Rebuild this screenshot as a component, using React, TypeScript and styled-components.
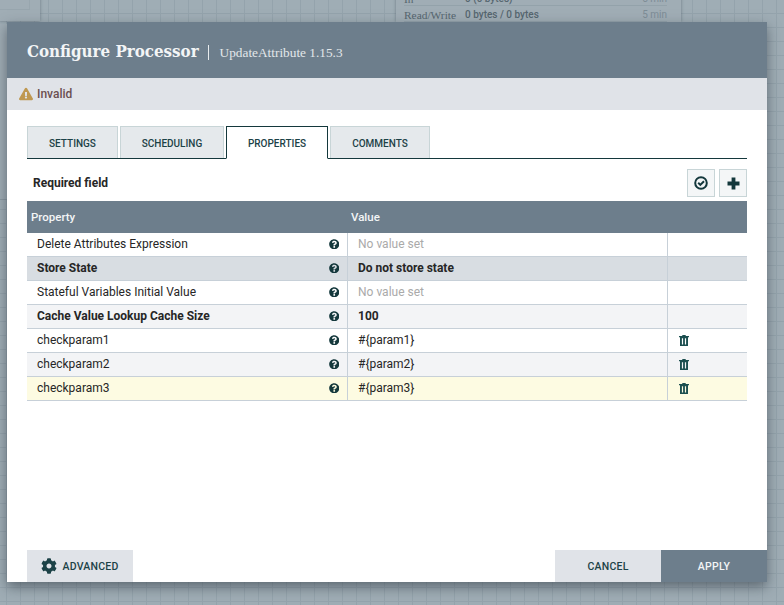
import React from "react";
import styled, { createGlobalStyle } from "styled-components";
import { FaCog, FaQuestionCircle, FaExclamationTriangle } from "react-icons/fa";

const Global = createGlobalStyle`
  html, body { margin: 0; padding: 0; width: 784px; height: 605px; overflow: hidden; }
  body { font-family: Roboto, "Liberation Sans", sans-serif; }
  * { box-sizing: border-box; }
`;

const Canvas = styled.div`
  position: relative;
  width: 784px;
  height: 605px;
  overflow: hidden;
  background-color: #9fadb5;
  background-image:
    linear-gradient(#94a3ac 1px, transparent 1px),
    linear-gradient(90deg, #94a3ac 1px, transparent 1px);
  background-size: 14px 14px;
  background-position: 6px 13px;
`;

const NodeCard = styled.div`
  position: absolute;
  left: 396px;
  top: -10px;
  width: 285px;
  height: 32px;
  background: #a0adb5;
  box-shadow: 0 0 3px rgba(60, 75, 85, 0.5);
  padding: 0 14px 0 8px;
  font-family: "Liberation Serif", serif;
  font-size: 11.4px;
  color: #56666f;
`;

const NodeRow = styled.div`
  display: grid;
  grid-template-columns: 61px 1fr auto;
  height: 16px;
  align-items: center;
  border-bottom: 1px solid #93a2aa;
  padding-top: 2px;
`;

const NodeValue = styled.span`
  font-family: Roboto, sans-serif;
  font-weight: 500;
  font-size: 10px;
`;

const NodeAge = styled.span`
  font-family: Roboto, sans-serif;
  font-size: 10px;
  color: #7d8c95;
`;

const CornerCard = styled.div`
  position: absolute;
  left: -1px;
  top: -8px;
  width: 41px;
  height: 29px;
  background: #a0adb5;
  box-shadow: 0 0 3px rgba(60, 75, 85, 0.5);
  &::after {
    content: "";
    position: absolute;
    left: 0;
    top: 0;
    width: 30px;
    height: 17px;
    border: solid #98a6ae;
    border-width: 0 1px 1px 0;
  }
`;

const SideCard = styled.div`
  position: absolute;
  left: -1px;
  top: 24px;
  width: 8px;
  height: 176px;
  background: #a0adb5;
  border-bottom: 1px solid #8b99a2;
`;

const Dialog = styled.div`
  position: absolute;
  left: 7px;
  top: 22px;
  width: 760px;
  height: 560px;
  background: #fff;
  box-shadow: 0 5px 12px rgba(40, 50, 58, 0.55);
  display: flex;
  flex-direction: column;
`;

const Header = styled.header`
  height: 56px;
  background: #6d7e8c;
  display: flex;
  align-items: center;
  padding: 0 0 0 20px;
  flex: none;
`;

const Title = styled.h1`
  margin: 0;
  padding-top: 2px;
  font-family: "DejaVu Serif Condensed", "DejaVu Serif", serif;
  font-size: 16.8px;
  font-weight: 700;
  color: #f3f5f6;
`;

const Subtitle = styled.span`
  margin: 4px 0 0 9px;
  padding-left: 11px;
  border-left: 1px solid #e8ecee;
  font-family: "Liberation Serif", serif;
  font-size: 13.3px;
  line-height: 15px;
  color: #e3e7ea;
`;

const StatusBar = styled.div`
  height: 32px;
  flex: none;
  background: #e0e3e8;
  display: flex;
  align-items: center;
  gap: 4px;
  padding-left: 12px;
  font-size: 12px;
  font-weight: 500;
  color: #6b4f50;
  svg { color: #bf9850; font-size: 14px; }
`;

const Body = styled.div`
  flex: 1;
  padding: 16px 20px 0;
  display: flex;
  flex-direction: column;
  min-height: 0;
`;

const Tabs = styled.div`
  display: flex;
  height: 33px;
  flex: none;
  border-bottom: 1px solid #14383c;
`;

const Tab = styled.div<{ $w: number; $gap: number; $active?: boolean }>`
  width: ${(p) => p.$w}px;
  margin-right: ${(p) => p.$gap}px;
  height: ${(p) => (p.$active ? 33 : 32)}px;
  display: flex;
  align-items: center;
  justify-content: center;
  padding-top: 2px;
  font-size: 10px;
  font-weight: 500;
  color: #1c4247;
  background: ${(p) => (p.$active ? "#fff" : "#e5e9ec")};
  border: 1px solid ${(p) => (p.$active ? "#14383c" : "#c8d5d7")};
  border-bottom: ${(p) => (p.$active ? "1px solid #fff" : "none")};
`;

const Toolbar = styled.div`
  height: 42px;
  flex: none;
  display: flex;
  align-items: center;
  justify-content: space-between;
  padding: 6px 0 0 6px;
`;

const Required = styled.div`
  font-size: 12px;
  font-weight: 700;
  color: #262626;
`;

const ToolButtons = styled.div`
  display: flex;
  gap: 4px;
`;

const ToolButton = styled.div`
  width: 28px;
  height: 28px;
  display: flex;
  align-items: center;
  justify-content: center;
  background: #f4f6f7;
  border: 1px solid #c8d5d7;
  color: #14383c;
`;

const Table = styled.div`
  display: flex;
  flex-direction: column;
`;

const HeadRow = styled.div`
  display: grid;
  grid-template-columns: 320px 320px 80px;
  height: 32px;
  background: #6d7e8c;
  color: #f3f5f6;
  font-size: 11.5px;
  font-weight: 500;
  align-items: center;
`;

const HeadCell = styled.div`
  padding: 0 0 1px 4px;
`;

const Row = styled.div<{ $bg: string }>`
  display: grid;
  grid-template-columns: 321px 320px 79px;
  height: 24px;
  background: ${(p) => p.$bg};
  border-bottom: 1px solid #c7d0d8;
  font-size: 12px;
  color: #262626;
`;

const NameCell = styled.div<{ $bold?: boolean }>`
  display: flex;
  align-items: center;
  justify-content: space-between;
  padding: 0 8px 1px 10px;
  font-weight: ${(p) => (p.$bold ? 700 : 400)};
  border-right: 1px solid #c7d0d8;
  svg { color: #14383c; font-size: 10.5px; }
`;

const ValueCell = styled.div<{ $bold?: boolean; $empty?: boolean }>`
  display: flex;
  align-items: center;
  padding: 0 0 1px 10px;
  font-weight: ${(p) => (p.$bold ? 700 : 400)};
  color: ${(p) => (p.$empty ? "#aaaaaa" : "#262626")};
  border-right: 1px solid #c7d0d8;
`;

const ActionCell = styled.div`
  display: flex;
  align-items: center;
  padding: 0 0 1px 11px;
  color: #1c4f50;
`;

const Footer = styled.footer`
  height: 32px;
  flex: none;
  display: flex;
  justify-content: space-between;
  padding-left: 20px;
`;

const FooterRight = styled.div`
  display: flex;
`;

const FootButton = styled.div<{ $primary?: boolean }>`
  width: 106px;
  height: 32px;
  display: flex;
  align-items: center;
  justify-content: center;
  gap: 5px;
  font-size: 10.5px;
  font-weight: 500;
  letter-spacing: 0.25px;
  background: ${(p) => (p.$primary ? "#6d7e8c" : "#e0e3e8")};
  color: ${(p) => (p.$primary ? "#f3f5f6" : "#1c4247")};
  svg { font-size: 16px; }
`;

const VerifyIcon = () => (
  <svg width="14" height="14" viewBox="0 0 14 14" fill="none" stroke="currentColor">
    <circle cx="7" cy="7" r="5.8" strokeWidth="2" />
    <path d="M4.2 6.8 L6.3 8.9 L10 5.2" strokeWidth="2" />
  </svg>
);

const PlusIcon = () => (
  <svg width="13" height="13" viewBox="0 0 13 13" fill="currentColor">
    <path d="M4.6 0.5 H8.4 V4.6 H12.5 V8.4 H8.4 V12.5 H4.6 V8.4 H0.5 V4.6 H4.6 Z" />
  </svg>
);

const TrashIcon = () => (
  <svg width="10" height="11" viewBox="0 0 10 11" fill="currentColor">
    <path fillRule="evenodd" d="M3 1 L3.6 0 H6.4 L7 1 H10 V2.2 H9 V11 H1 V2.2 H0 V1 Z M2.9 3.2 V9.6 H4.1 V3.2 Z M5.9 3.2 V9.6 H7.1 V3.2 Z" />
  </svg>
);

const rows = [
  { name: "Delete Attributes Expression", value: "No value set", empty: true, bg: "#fff" },
  { name: "Store State", value: "Do not store state", bold: true, bg: "#d8dde2" },
  { name: "Stateful Variables Initial Value", value: "No value set", empty: true, bg: "#fff" },
  { name: "Cache Value Lookup Cache Size", value: "100", bold: true, bg: "#f3f4f6" },
  { name: "checkparam1", value: "#{param1}", del: true, bg: "#fff" },
  { name: "checkparam2", value: "#{param2}", del: true, bg: "#f3f4f6" },
  { name: "checkparam3", value: "#{param3}", del: true, bg: "#fdfbe2" },
];

export default function App() {
  return (
    <Canvas>
      <Global />
      <CornerCard />
      <SideCard />
      <NodeCard>
        <NodeRow>
          <span>In</span>
          <NodeValue>0 (0 bytes)</NodeValue>
          <NodeAge>5 min</NodeAge>
        </NodeRow>
        <NodeRow>
          <span>Read/Write</span>
          <NodeValue>0 bytes / 0 bytes</NodeValue>
          <NodeAge>5 min</NodeAge>
        </NodeRow>
      </NodeCard>
      <Dialog>
        <Header>
          <Title>Configure Processor</Title>
          <Subtitle>UpdateAttribute 1.15.3</Subtitle>
        </Header>
        <StatusBar>
          <FaExclamationTriangle />
          Invalid
        </StatusBar>
        <Body>
          <Tabs>
            <Tab $w={91} $gap={2}>SETTINGS</Tab>
            <Tab $w={104} $gap={2}>SCHEDULING</Tab>
            <Tab $w={102} $gap={2} $active>PROPERTIES</Tab>
            <Tab $w={100} $gap={0}>COMMENTS</Tab>
          </Tabs>
          <Toolbar>
            <Required>Required field</Required>
            <ToolButtons>
              <ToolButton><VerifyIcon /></ToolButton>
              <ToolButton><PlusIcon /></ToolButton>
            </ToolButtons>
          </Toolbar>
          <Table>
            <HeadRow>
              <HeadCell>Property</HeadCell>
              <HeadCell>Value</HeadCell>
              <HeadCell />
            </HeadRow>
            {rows.map((r) => (
              <Row key={r.name} $bg={r.bg}>
                <NameCell $bold={r.bold}>
                  {r.name}
                  <FaQuestionCircle />
                </NameCell>
                <ValueCell $bold={r.bold} $empty={r.empty}>{r.value}</ValueCell>
                <ActionCell>{r.del && <TrashIcon />}</ActionCell>
              </Row>
            ))}
          </Table>
        </Body>
        <Footer>
          <FootButton>
            <FaCog />
            ADVANCED
          </FootButton>
          <FooterRight>
            <FootButton>CANCEL</FootButton>
            <FootButton $primary>APPLY</FootButton>
          </FooterRight>
        </Footer>
      </Dialog>
    </Canvas>
  );
}
